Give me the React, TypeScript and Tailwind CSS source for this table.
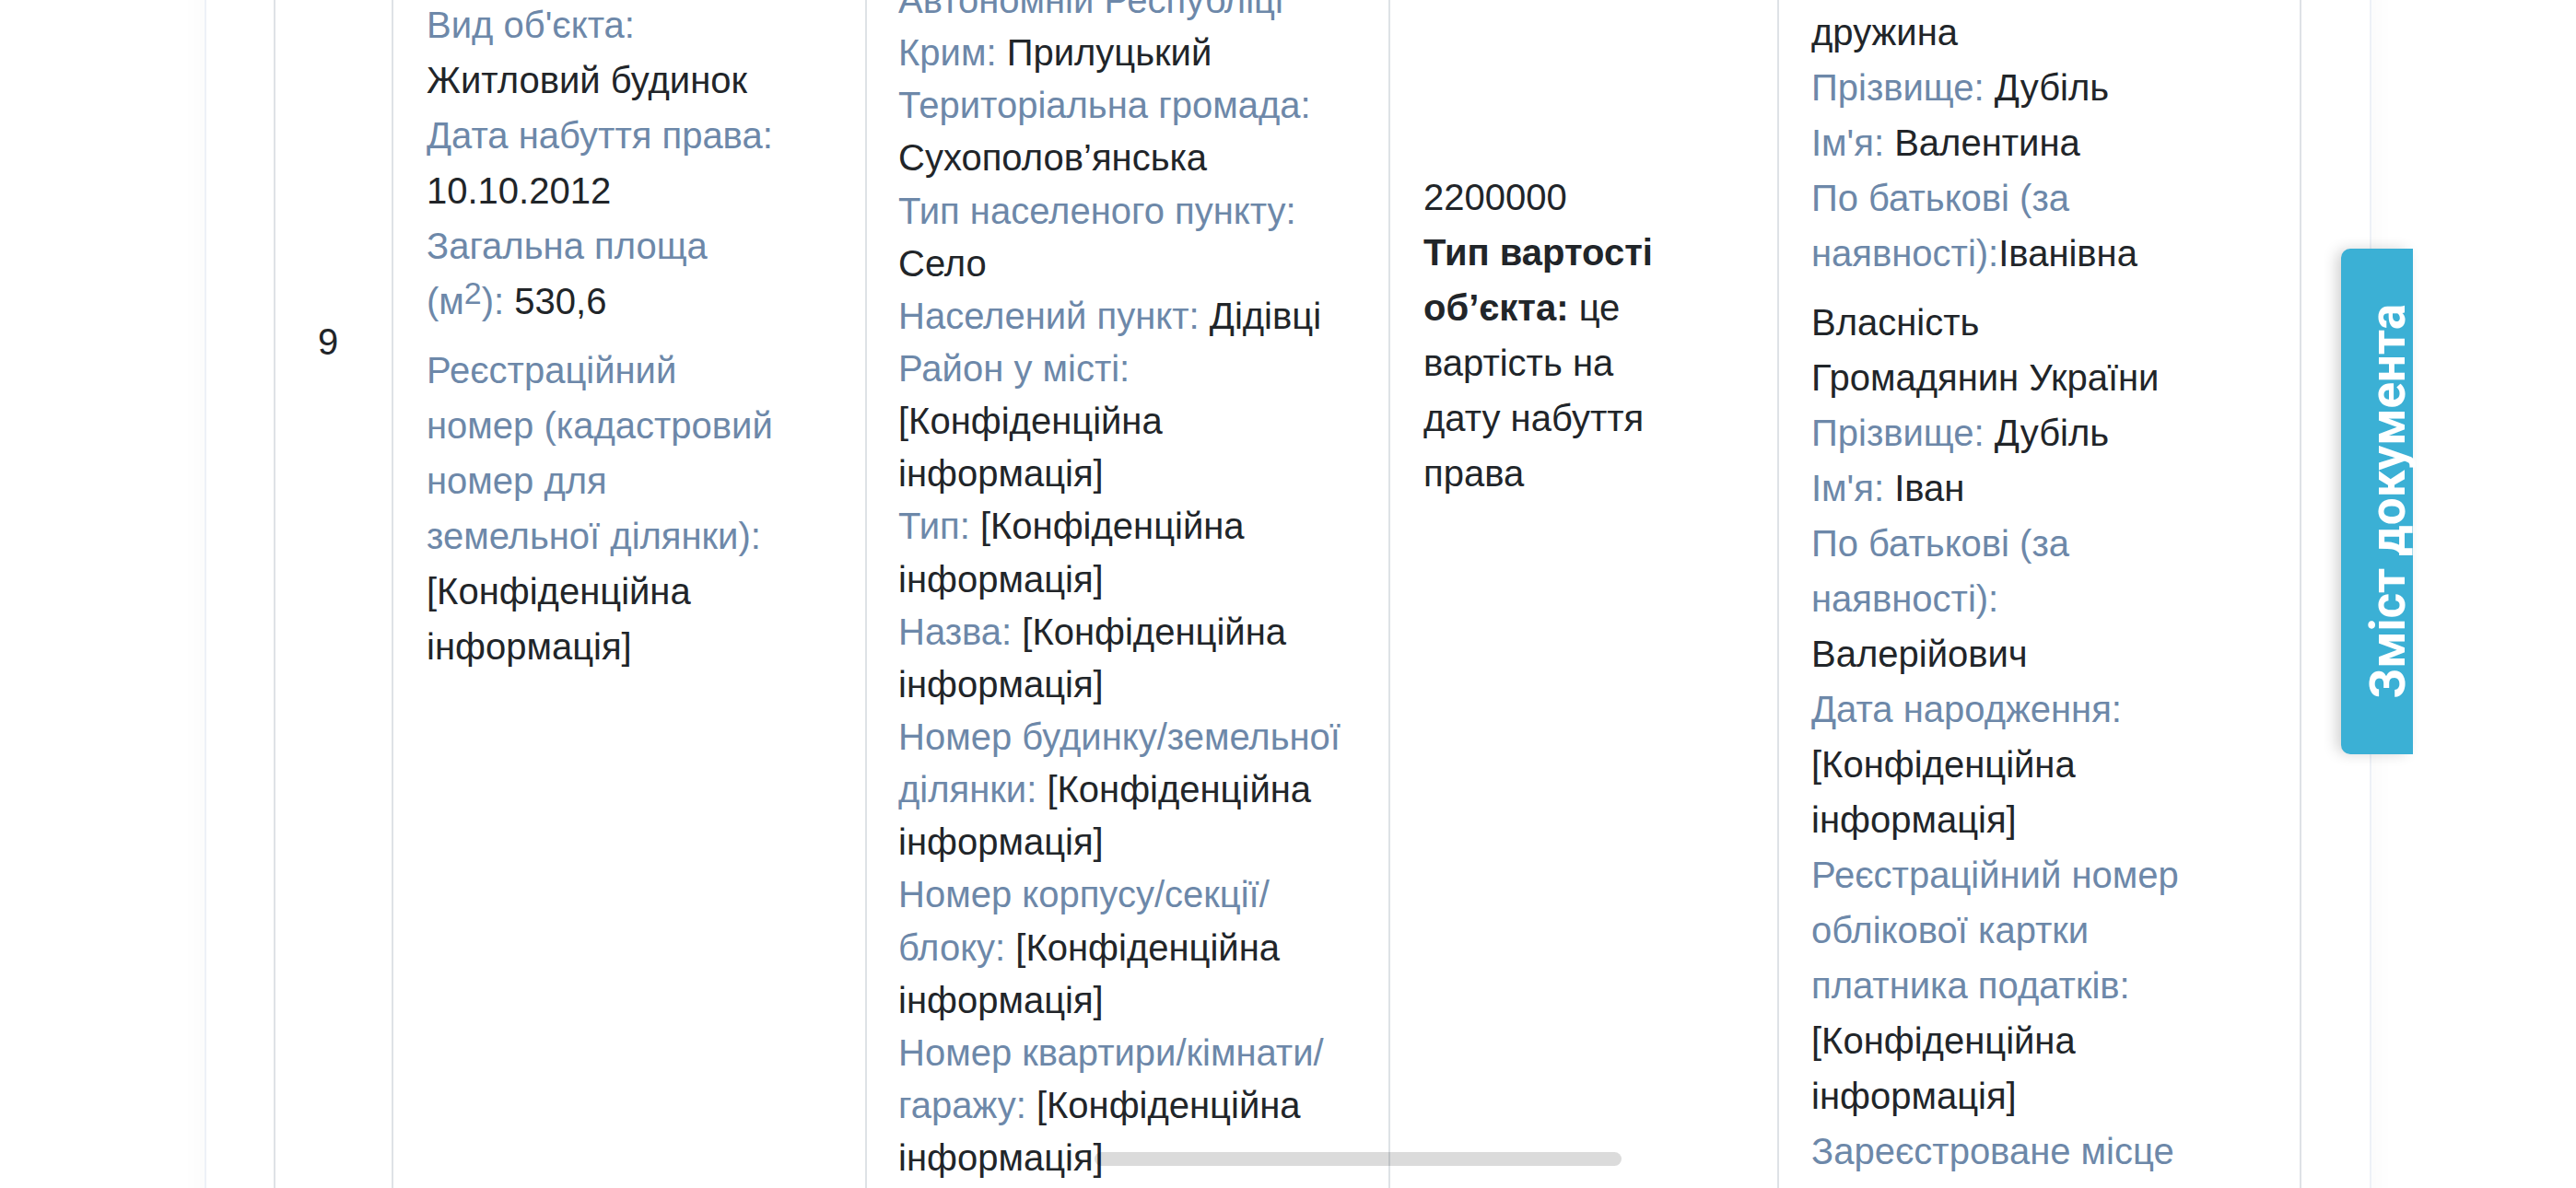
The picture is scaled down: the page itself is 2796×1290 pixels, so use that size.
const L = ({ children }: { children: React.ReactNode }) => (
  <span className="text-[#6d88a9]">{children}</span>
);

const Row = ({ children, className = "" }: { children?: React.ReactNode; className?: string }) => (
  <div className={`whitespace-nowrap ${className}`}>{children}</div>
);

export default function App() {
  return (
    <div className="relative h-[1290px] overflow-hidden bg-white font-['Liberation_Sans',Arial,sans-serif] text-[40px] text-[#212529]">
      <div className="-mt-[60px] mx-auto w-[2352px] border-x-2 border-[#edf1f7] pl-[73px] pr-[74px] shadow-[0_0_30px_rgba(0,0,0,0.03)]">
        <div className="flex h-[1500px] border-r-2 border-[#dee2e6]">
          {/* № */}
          <div className="w-[128px] shrink-0 border-l-2 border-[#dee2e6] pt-[401px] pl-[46px] leading-[60px]">
            9
          </div>

          {/* Object */}
          <div className="w-[514px] shrink-0 border-l-2 border-[#dee2e6] pt-[57px] pl-[36px] leading-[60px]">
            <Row><L>Вид об'єкта:</L></Row>
            <Row>Житловий будинок</Row>
            <Row><L>Дата набуття права:</L></Row>
            <Row>10.10.2012</Row>
            <Row><L>Загальна площа</L></Row>
            <Row>
              <L>
                (м<span className="relative -top-[11px] text-[34px]">2</span>):
              </L>{" "}
              530,6
            </Row>
            <div className="mt-[13px]">
              <Row><L>Реєстраційний</L></Row>
              <Row><L>номер (кадастровий</L></Row>
              <Row><L>номер для</L></Row>
              <Row><L>земельної ділянки):</L></Row>
              <Row>[Конфіденційна</Row>
              <Row>інформація]</Row>
            </div>
          </div>

          {/* Address */}
          <div className="w-[568px] shrink-0 border-l-2 border-[#dee2e6] pt-[32px] pl-[34px] leading-[57.14px]">
            <Row><L>Автономній Республіці</L></Row>
            <Row><L>Крим:</L> Прилуцький</Row>
            <Row><L>Територіальна громада:</L></Row>
            <Row>Сухополов’янська</Row>
            <Row><L>Тип населеного пункту:</L></Row>
            <Row>Село</Row>
            <Row><L>Населений пункт:</L> Дідівці</Row>
            <Row><L>Район у місті:</L></Row>
            <Row>[Конфіденційна</Row>
            <Row>інформація]</Row>
            <Row><L>Тип:</L> [Конфіденційна</Row>
            <Row>інформація]</Row>
            <Row><L>Назва:</L> [Конфіденційна</Row>
            <Row>інформація]</Row>
            <Row><L>Номер будинку/земельної</L></Row>
            <Row><L>ділянки:</L> [Конфіденційна</Row>
            <Row>інформація]</Row>
            <Row><L>Номер корпусу/секції/</L></Row>
            <Row><L>блоку:</L> [Конфіденційна</Row>
            <Row>інформація]</Row>
            <Row><L>Номер квартири/кімнати/</L></Row>
            <Row><L>гаражу:</L> [Конфіденційна</Row>
            <Row>інформація]</Row>
          </div>

          {/* Value */}
          <div className="w-[422px] shrink-0 border-l-2 border-[#dee2e6] pt-[244px] pl-[36px] leading-[60px]">
            <Row>2200000</Row>
            <Row className="font-bold">Тип вартості</Row>
            <Row><span className="font-bold">об’єкта:</span> це</Row>
            <Row>вартість на</Row>
            <Row>дату набуття</Row>
            <Row>права</Row>
          </div>

          {/* Owners */}
          <div className="w-[567px] shrink-0 border-l-2 border-[#dee2e6] pt-[65px] pl-[35px] leading-[60px]">
            <Row>дружина</Row>
            <Row><L>Прізвище:</L> Дубіль</Row>
            <Row><L>Ім'я:</L> Валентина</Row>
            <Row><L>По батькові (за</L></Row>
            <Row><L>наявності):</L>Іванівна</Row>
            <div className="mt-[15px]">
              <Row>Власність</Row>
              <Row>Громадянин України</Row>
              <Row><L>Прізвище:</L> Дубіль</Row>
              <Row><L>Ім'я:</L> Іван</Row>
              <Row><L>По батькові (за</L></Row>
              <Row><L>наявності):</L></Row>
              <Row>Валерійович</Row>
              <Row><L>Дата народження:</L></Row>
              <Row>[Конфіденційна</Row>
              <Row>інформація]</Row>
              <Row><L>Реєстраційний номер</L></Row>
              <Row><L>облікової картки</L></Row>
              <Row><L>платника податків:</L></Row>
              <Row>[Конфіденційна</Row>
              <Row>інформація]</Row>
              <Row><L>Зареєстроване місце</L></Row>
            </div>
          </div>
        </div>
      </div>

      {/* overlay scrollbar thumb */}
      <div className="absolute left-[1188px] top-[1251px] h-[15px] w-[572px] rounded-full bg-black/[0.14]" />

      {/* side tab */}
      <button className="absolute left-[2541px] top-[270px] flex h-[549px] w-[78px] items-center justify-start rounded-l-[10px] bg-[#3bb0d5] pl-[26px] shadow-[-6px_0_16px_-2px_rgba(0,0,0,0.2)]">
        <span className="rotate-180 whitespace-nowrap font-['Roboto',sans-serif] text-[53px] font-bold leading-[50px] text-white [writing-mode:vertical-rl]">
          Зміст документа
        </span>
      </button>
    </div>
  );
}
